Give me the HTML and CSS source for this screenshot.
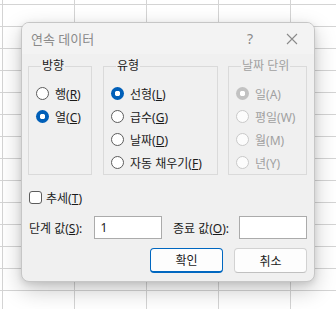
FILE: index.html
```html
<!DOCTYPE html>
<html lang="ko">
<head>
  <meta charset="UTF-8" />
  <title>연속 데이터</title>
  <link rel="stylesheet" href="styles.css">
</head>
<body>
  <!-- 시트 위에 떠 있는 대화 상자 -->
  <div class="dialog">
    <div class="titlebar">
      <span class="title">연속 데이터</span>
      <span class="help">?</span>
      <svg class="close" width="12" height="12" viewBox="0 0 12 12">
        <path d="M1 1 L11 11 M11 1 L1 11" stroke="#8a8a8a" stroke-width="1.1" fill="none"/>
      </svg>
    </div>

    <div class="body">
      <div class="groups">
        <fieldset class="group g-dir">
          <legend>방향</legend>
          <label class="opt"><span class="radio"></span><span>행(<u>R</u>)</span></label>
          <label class="opt"><span class="radio on"></span><span>열(<u>C</u>)</span></label>
        </fieldset>

        <fieldset class="group g-type">
          <legend>유형</legend>
          <label class="opt"><span class="radio on"></span><span>선형(<u>L</u>)</span></label>
          <label class="opt"><span class="radio"></span><span>급수(<u>G</u>)</span></label>
          <label class="opt"><span class="radio"></span><span>날짜(<u>D</u>)</span></label>
          <label class="opt"><span class="radio"></span><span>자동 채우기(<u>F</u>)</span></label>
        </fieldset>

        <fieldset class="group g-date off">
          <legend>날짜 단위</legend>
          <label class="opt"><span class="radio on"></span><span>일(A)</span></label>
          <label class="opt"><span class="radio"></span><span>평일(W)</span></label>
          <label class="opt"><span class="radio"></span><span>월(M)</span></label>
          <label class="opt"><span class="radio"></span><span>년(Y)</span></label>
        </fieldset>
      </div>

      <label class="trend"><span class="check"></span><span>추세(<u>T</u>)</span></label>

      <div class="values">
        <span class="lbl">단계 값(<u>S</u>):</span>
        <span class="field">1</span>
        <span class="lbl lbl-end">종료 값(<u>O</u>):</span>
        <span class="field"></span>
      </div>

      <div class="buttons">
        <button class="btn primary">확인</button>
        <button class="btn">취소</button>
      </div>
    </div>
  </div>
</body>
</html>
```

FILE: styles.css
```css
:root {
  --grid-line: #d4d4d4;
  --dlg-bg: #f0f0f0;
  --title-bg: #f3f3f3;
  --text: #1b1b1b;
  --muted: #8a8a8a;
  --accent: #005fb8;
}

* { box-sizing: border-box; }

html, body {
  margin: 0;
  height: 100%;
  font-family: "Noto Sans", "Noto Sans CJK KR", sans-serif;
  font-size: 12px;
  color: var(--text);
}

/* 뒤쪽 엑셀 시트 격자 */
body {
  background-color: #fff;
  background-image:
    linear-gradient(to right, var(--grid-line) 1px, transparent 1px),
    linear-gradient(to bottom, var(--grid-line) 1px, transparent 1px);
  background-size: 72px 22px;
  background-position: 2px 4px;
  position: relative;
  overflow: hidden;
}

/* === 대화 상자 창 === */
.dialog {
  position: absolute;
  left: 21px;
  top: 22px;
  width: 294px;
  height: 260px;
  background: var(--dlg-bg);
  border: 1px solid #c6c6c6;
  border-radius: 8px;
  box-shadow: 0 8px 22px rgba(0,0,0,0.22), 0 2px 6px rgba(0,0,0,0.1);
  overflow: hidden;
}

.titlebar {
  height: 31px;
  background: var(--title-bg);
  display: flex;
  align-items: center;
  padding: 0 16px 0 9px;
}
.titlebar .title {
  flex: 1;
  font-size: 13px;
  color: var(--muted);
}
.titlebar .help {
  font-size: 14px;
  color: var(--muted);
  margin-right: 33px;
}

.body {
  padding: 5px 7px 0 6px;
}

/* === 그룹 상자 === */
.groups {
  display: flex;
  gap: 11px;
}
.groups .g-date { margin-left: -1px; }

.group {
  margin: 0;
  padding: 9px 0 0 7px;
  border: 1px solid #dadada;
  display: flex;
  flex-direction: column;
  min-width: 0;
}
.group legend {
  padding: 0 1px;
  margin-left: 5px;
  font-size: 12px;
  line-height: 14px;
}
.g-dir  { width: 64px; }
.g-type { width: 115px; }
.g-date { width: 79px; }

.opt {
  height: 23px;
  display: flex;
  align-items: center;
  gap: 6px;
  white-space: nowrap;
}

.radio {
  width: 13px;
  height: 13px;
  border-radius: 50%;
  border: 1px solid #5c5c5c;
  background: #fff;
  flex: none;
}
.radio.on {
  border: none;
  background: radial-gradient(circle, #fff 0 2.6px, var(--accent) 3px);
}

.off legend,
.off .opt { color: #a0a0a0; }
.off .radio { border-color: #c9c9c9; background: #fcfcfc; }
.off .radio.on {
  border: none;
  background: radial-gradient(circle, #fff 0 2.6px, #c2c2c2 3px);
}

/* === 추세 === */
.trend {
  height: 23px;
  margin-top: 11px;
  padding-left: 1px;
  display: flex;
  align-items: center;
  gap: 4px;
}
.check {
  width: 13px;
  height: 13px;
  border: 1px solid #5c5c5c;
  border-radius: 3px;
  background: #fff;
}

/* === 단계 값 / 종료 값 === */
.values {
  display: flex;
  align-items: center;
  margin-top: 7px;
  height: 23px;
}
.lbl { width: 67px; padding-left: 1px; }
.lbl-end { width: 68px; margin-left: 10px; }
.field {
  width: 68px;
  height: 23px;
  background: #fff;
  border: 1px solid #ababab;
  padding-left: 5px;
  line-height: 21px;
}

/* === 버튼 === */
.buttons {
  display: flex;
  justify-content: flex-end;
  gap: 11px;
  margin-top: 9px;
}
.btn {
  width: 73px;
  height: 25px;
  font-family: inherit;
  font-size: 12px;
  color: var(--text);
  background: #fdfdfd;
  border: 1px solid #d2d2d2;
  border-bottom-color: #c0c0c0;
  border-radius: 4px;
  padding: 0;
}
.btn.primary {
  border: 1px solid #0067c0;
  border-bottom-width: 2px;
}
```
